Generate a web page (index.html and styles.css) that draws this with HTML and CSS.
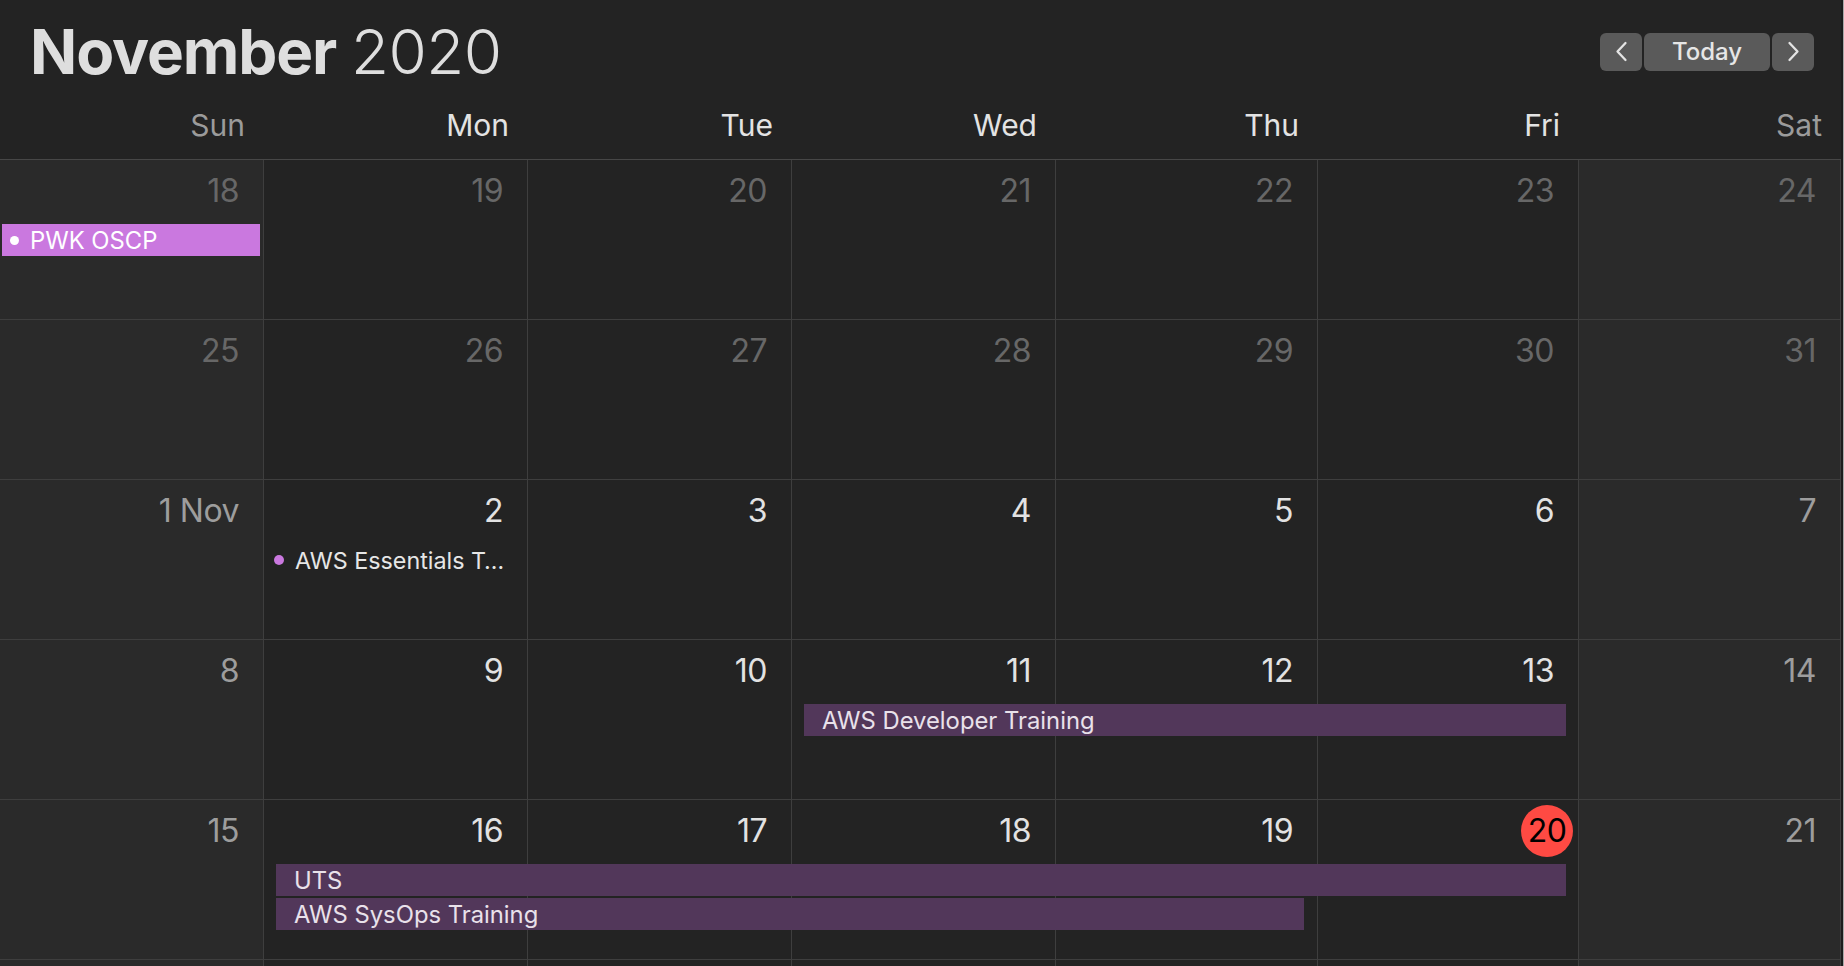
FILE: index.html
```html
<!DOCTYPE html>
<html lang="en">
<head>
<meta charset="utf-8">
<title>Calendar – November 2020</title>
<link rel="stylesheet" href="styles.css">
</head>
<body>
<div class="app">
  <main class="cal">
    <header class="cal-header">
      <div class="top">
        <h1 class="title"><span class="month">November</span> <span class="year">2020</span></h1>
        <div class="nav">
          <button class="nav-btn arrow" aria-label="Previous month">
            <svg width="13" height="21" viewBox="0 0 13 21"><path d="M10.5 2 L2.5 10.5 L10.5 19" fill="none" stroke="#e4e4e4" stroke-width="2.3" stroke-linecap="round" stroke-linejoin="round"/></svg>
          </button>
          <button class="nav-btn today">Today</button>
          <button class="nav-btn arrow" aria-label="Next month">
            <svg width="13" height="21" viewBox="0 0 13 21"><path d="M2.5 2 L10.5 10.5 L2.5 19" fill="none" stroke="#e4e4e4" stroke-width="2.3" stroke-linecap="round" stroke-linejoin="round"/></svg>
          </button>
        </div>
      </div>
      <div class="weekdays">
        <div class="wd weekend">Sun</div>
        <div class="wd">Mon</div>
        <div class="wd">Tue</div>
        <div class="wd">Wed</div>
        <div class="wd">Thu</div>
        <div class="wd">Fri</div>
        <div class="wd weekend">Sat</div>
      </div>
    </header>

    <section class="weeks">
      <div class="week">
        <div class="day weekend other"><span class="num">18</span></div>
        <div class="day other"><span class="num">19</span></div>
        <div class="day other"><span class="num">20</span></div>
        <div class="day other"><span class="num">21</span></div>
        <div class="day other"><span class="num">22</span></div>
        <div class="day other"><span class="num">23</span></div>
        <div class="day weekend other"><span class="num">24</span></div>
        <div class="event allday pink ev-pwk"><span class="dot"></span>PWK OSCP</div>
      </div>

      <div class="week">
        <div class="day weekend other"><span class="num">25</span></div>
        <div class="day other"><span class="num">26</span></div>
        <div class="day other"><span class="num">27</span></div>
        <div class="day other"><span class="num">28</span></div>
        <div class="day other"><span class="num">29</span></div>
        <div class="day other"><span class="num">30</span></div>
        <div class="day weekend other"><span class="num">31</span></div>
      </div>

      <div class="week">
        <div class="day weekend"><span class="num">1 Nov</span></div>
        <div class="day"><span class="num">2</span></div>
        <div class="day"><span class="num">3</span></div>
        <div class="day"><span class="num">4</span></div>
        <div class="day"><span class="num">5</span></div>
        <div class="day"><span class="num">6</span></div>
        <div class="day weekend"><span class="num">7</span></div>
        <div class="event timed ev-ess" title="AWS Essentials Training"><span class="dot"></span><span class="label">AWS Essentials T…</span></div>
      </div>

      <div class="week">
        <div class="day weekend"><span class="num">8</span></div>
        <div class="day"><span class="num">9</span></div>
        <div class="day"><span class="num">10</span></div>
        <div class="day"><span class="num">11</span></div>
        <div class="day"><span class="num">12</span></div>
        <div class="day"><span class="num">13</span></div>
        <div class="day weekend"><span class="num">14</span></div>
        <div class="event allday plum ev-dev">AWS Developer Training</div>
      </div>

      <div class="week">
        <div class="day weekend"><span class="num">15</span></div>
        <div class="day"><span class="num">16</span></div>
        <div class="day"><span class="num">17</span></div>
        <div class="day"><span class="num">18</span></div>
        <div class="day"><span class="num">19</span></div>
        <div class="day today-cell"><span class="num today">20</span></div>
        <div class="day weekend"><span class="num">21</span></div>
        <div class="event allday plum ev-uts">UTS</div>
        <div class="event allday plum ev-sysops">AWS SysOps Training</div>
      </div>

      <div class="week" aria-hidden="true">
        <div class="day weekend"></div>
        <div class="day"></div>
        <div class="day"></div>
        <div class="day"></div>
        <div class="day"></div>
        <div class="day"></div>
        <div class="day weekend"></div>
      </div>
    </section>
  </main>
  <div class="edge"></div>
</div>
</body>
</html>
```

FILE: styles.css
```css
* { box-sizing: border-box; }

html, body {
  margin: 0;
  padding: 0;
  height: 100%;
  overflow: hidden;
  background: #232323;
}

body {
  font-family: Inter, "Noto Sans", "Liberation Sans", sans-serif;
  color: #e2e2e2;
}

.app {
  display: flex;
  height: 100%;
}

.cal {
  width: 1841px;
  flex: none;
}

.edge {
  width: 3px;
  flex: none;
  border-left: 2px solid #1c1c1c;
  background: #a8a8a8;
}

/* ---------- header ---------- */
.cal-header {
  border-bottom: 1px solid #474747;
}

.top {
  height: 103px;
  display: flex;
  align-items: center;
  justify-content: space-between;
  padding: 0 27px 0 30px;
}

.title {
  margin: 0;
  font-size: 62px;
  line-height: 1;
  color: #dedede;
}

.month { font-weight: 700; letter-spacing: -1.1px; }
.year { font-weight: 300; letter-spacing: -0.5px; }

.nav {
  display: flex;
  gap: 2px;
}

.nav-btn {
  height: 38px;
  border: 0;
  border-radius: 6px;
  background: #5a5a5a;
  color: #e6e6e6;
  font-family: inherit;
  font-size: 24px;
  font-weight: 500;
  padding: 0;
  display: flex;
  align-items: center;
  justify-content: center;
}

.arrow { width: 42px; }
.today { width: 126px; }

.weekdays {
  height: 56px;
  padding-top: 7px;
  display: grid;
  grid-template-columns: 264px 264px 264px 264px 262px 261px 262px;
}

.wd {
  text-align: right;
  padding-right: 19px;
  font-size: 30px;
  line-height: 30px;
  color: #e3e3e3;
}

.wd.weekend { color: #9b9b9b; }

/* ---------- weeks ---------- */
.week {
  height: 160px;
  border-bottom: 1px solid #3e3e3e;
  display: grid;
  grid-template-columns: 264px 264px 264px 264px 262px 261px 262px;
  grid-template-rows: 62px 32px 32px 1fr;
  row-gap: 2px;
}

.day {
  grid-row: 1 / -1;
  background: #232323;
  border-right: 1px solid #3e3e3e;
  padding: 15px 24px 0 0;
  display: flex;
  justify-content: flex-end;
  align-items: flex-start;
}

.day:nth-child(1) { grid-column: 1; }
.day:nth-child(2) { grid-column: 2; }
.day:nth-child(3) { grid-column: 3; }
.day:nth-child(4) { grid-column: 4; }
.day:nth-child(5) { grid-column: 5; }
.day:nth-child(6) { grid-column: 6; }
.day:nth-child(7) { grid-column: 7; }

.day.weekend { background: #2a2a2a; }

.num {
  font-size: 32px;
  line-height: 32px;
  height: 32px;
  color: #e2e2e2;
  display: flex;
  align-items: center;
  letter-spacing: -0.5px;
}

.day.weekend .num { color: #9d9d9d; }
.day.other .num { color: #676767; }

.num.today {
  width: 52px;
  height: 52px;
  flex: none;
  margin: -10px -19px -10px 0;
  border-radius: 50%;
  background: #fe4a43;
  color: #000;
  justify-content: center;
}

/* ---------- events ---------- */
.event {
  grid-row: 2;
  height: 32px;
  display: flex;
  align-items: center;
  font-size: 23.8px;
  white-space: nowrap;
  overflow: hidden;
}

.allday.pink {
  background: #ca78df;
  color: #ffffff;
  padding-left: 8px;
}

.allday.pink .dot {
  width: 9px;
  height: 9px;
  border-radius: 50%;
  background: #fff;
  margin-right: 11px;
  flex: none;
}

.allday.plum {
  background: #52375a;
  color: #e9e1ea;
  padding-left: 18px;
}

.timed {
  color: #e6e6e6;
  padding-left: 10px;
  font-size: 23.3px;
}

.timed .dot {
  width: 10px;
  height: 10px;
  border-radius: 50%;
  background: #ca78df;
  margin-right: 11px;
  flex: none;
}

.ev-pwk { grid-column: 1 / 2; margin: 0 4px 0 2px; }
.ev-ess { grid-column: 2 / 3; margin: 0 4px 0 0; }
.ev-dev { grid-column: 4 / 7; margin: 0 13px 0 12px; }
.ev-uts { grid-column: 2 / 7; margin: 0 13px 0 12px; }
.ev-sysops { grid-column: 2 / 6; grid-row: 3; margin: 0 14px 0 12px; }
```
